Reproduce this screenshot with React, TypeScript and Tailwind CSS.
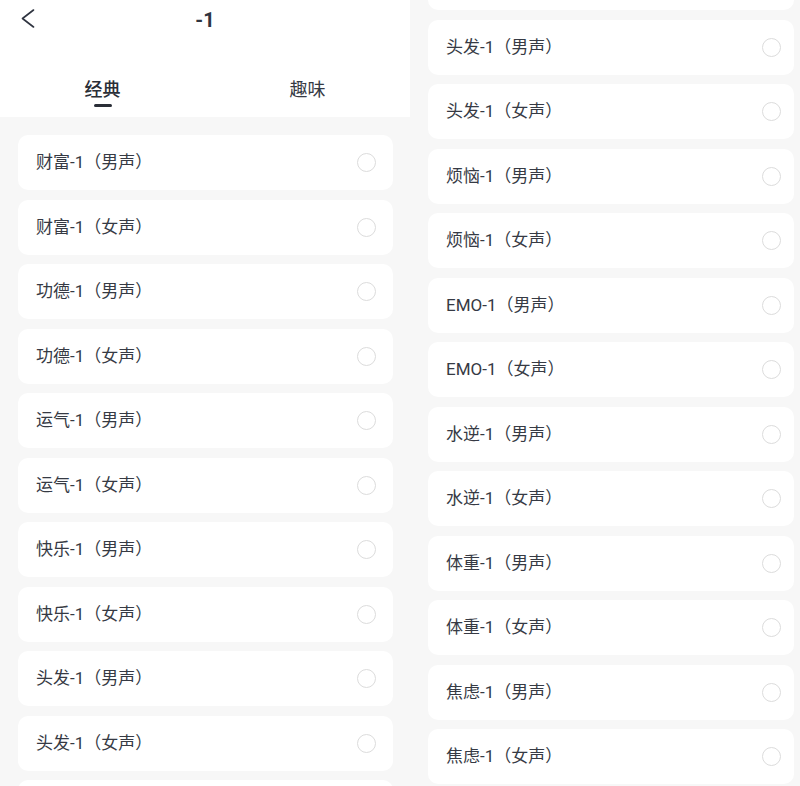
const leftItems = [
    "财富-1（男声）",
    "财富-1（女声）",
    "功德-1（男声）",
    "功德-1（女声）",
    "运气-1（男声）",
    "运气-1（女声）",
    "快乐-1（男声）",
    "快乐-1（女声）",
    "头发-1（男声）",
    "头发-1（女声）",
    "烦恼-1（男声）",
]

const rightItems = [
    "快乐-1（女声）",
    "头发-1（男声）",
    "头发-1（女声）",
    "烦恼-1（男声）",
    "烦恼-1（女声）",
    "EMO-1（男声）",
    "EMO-1（女声）",
    "水逆-1（男声）",
    "水逆-1（女声）",
    "体重-1（男声）",
    "体重-1（女声）",
    "焦虑-1（男声）",
    "焦虑-1（女声）",
]

function SoundRow({ label, tight }: { label: string; tight?: boolean }) {
    return (
        <div
            className={
                "flex h-[55px] shrink-0 items-center justify-between rounded-[10px] bg-white pl-[18px] " +
                (tight ? "pr-[13px]" : "pr-[17px]")
            }
        >
            <span className="pt-[1px] text-[17px] text-[#363a44]">{label}</span>
            <span className="h-[19px] w-[19px] rounded-full border border-[#dcdcdc]" />
        </div>
    )
}

export default function App() {
    return (
        <div
            className="flex h-[786px] w-[800px] overflow-hidden bg-[#f7f7f7]"
            style={{ fontFamily: 'Roboto, "Noto Sans CJK SC", sans-serif' }}
        >
            {/* 左侧：顶部导航 + 列表 */}
            <div className="flex w-[410px] shrink-0 flex-col">
                <div className="bg-white">
                    <div className="relative flex h-[40px] items-center justify-center">
                        <svg
                            className="absolute left-[21px] top-[9px]"
                            width="14"
                            height="20"
                            viewBox="0 0 14 20"
                            fill="none"
                        >
                            <path d="M12.5 1 L1.5 9.5 L12.5 18" stroke="#2f3440" strokeWidth="1.6" strokeLinecap="round" strokeLinejoin="round" />
                        </svg>
                        <span className="text-[20px] font-bold text-[#2f3440]">-1</span>
                    </div>
                    <div className="flex h-[77px] items-start pt-[37px]">
                        <div className="flex w-[205px] flex-col items-center">
                            <span className="text-[18px] font-medium leading-[26px] text-[#2a2e37]">经典</span>
                            <span className="mt-[1px] h-[2.5px] w-[18px] rounded-full bg-[#2a2e37]" />
                        </div>
                        <div className="flex w-[205px] flex-col items-center">
                            <span className="text-[18px] leading-[26px] text-[#363a44]">趣味</span>
                        </div>
                    </div>
                </div>
                <div className="flex flex-col gap-[9.5px] pl-[18px] pr-[17px] pt-[18px]">
                    {leftItems.map((item, i) => (
                        <SoundRow key={i} label={item} />
                    ))}
                </div>
            </div>

            {/* 右侧：滚动后的列表 */}
            <div className="flex-1 overflow-hidden">
                <div className="mt-[-45px] flex flex-col gap-[9.5px] pl-[18px] pr-[6px]">
                    {rightItems.map((item, i) => (
                        <SoundRow key={i} label={item} tight />
                    ))}
                </div>
            </div>
        </div>
    )
}
